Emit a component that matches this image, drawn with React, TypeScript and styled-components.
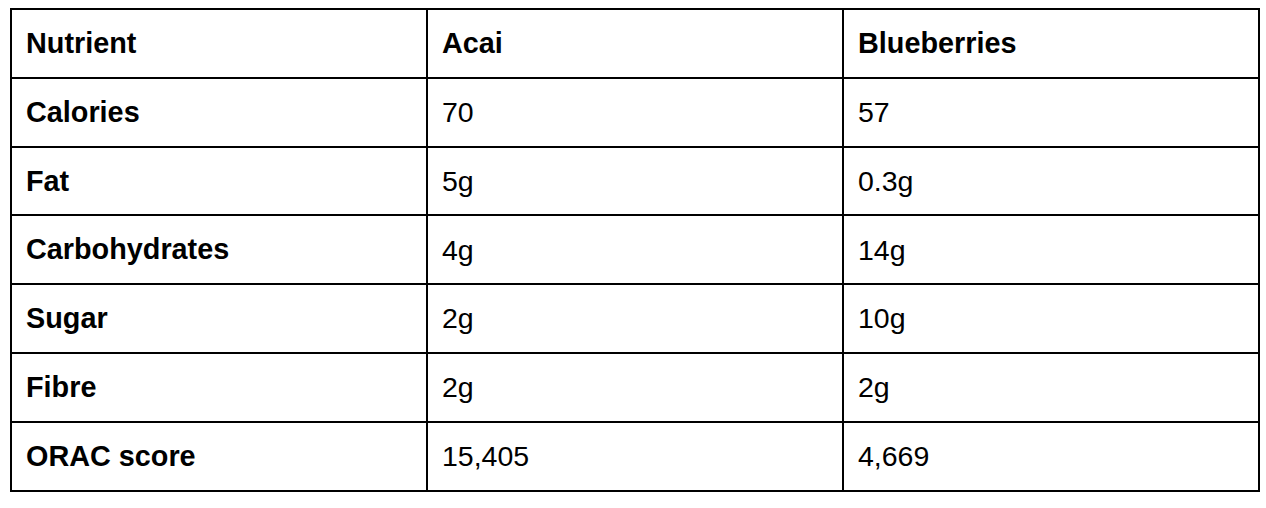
import styled, { createGlobalStyle } from "styled-components";

type Row = {
  nutrient: string;
  acai: string;
  blueberries: string;
};

const rows: Row[] = [
  { nutrient: "Calories", acai: "70", blueberries: "57" },
  { nutrient: "Fat", acai: "5g", blueberries: "0.3g" },
  { nutrient: "Carbohydrates", acai: "4g", blueberries: "14g" },
  { nutrient: "Sugar", acai: "2g", blueberries: "10g" },
  { nutrient: "Fibre", acai: "2g", blueberries: "2g" },
  { nutrient: "ORAC score", acai: "15,405", blueberries: "4,669" },
];

const GlobalStyle = createGlobalStyle`
  body {
    margin: 0;
    background: #fff;
    font-family: "Liberation Sans", Arial, sans-serif;
    color: #000;
  }
`;

const Page = styled.div`
  padding: 8px 0 0 10px;
`;

const Table = styled.table`
  width: 1250px;
  border-collapse: collapse;
  border: 2px solid #000;
  table-layout: fixed;
`;

const Tr = styled.tr`
  height: 68.8px;
`;

const Cell = styled.td<{ $bold?: boolean }>`
  border: 2px solid #000;
  padding: 0 14px;
  font-size: ${(p) => (p.$bold ? "28.8px" : "28.5px")};
  font-weight: ${(p) => (p.$bold ? 700 : 400)};
  line-height: 1;
  vertical-align: middle;
  text-align: left;
`;

export default function App(): JSX.Element {
  return (
    <>
      <GlobalStyle />
      <Page>
        <Table>
          <tbody>
            <Tr>
              <Cell $bold>Nutrient</Cell>
              <Cell $bold>Acai</Cell>
              <Cell $bold>Blueberries</Cell>
            </Tr>
            {rows.map((row) => (
              <Tr key={row.nutrient}>
                <Cell $bold>{row.nutrient}</Cell>
                <Cell>{row.acai}</Cell>
                <Cell>{row.blueberries}</Cell>
              </Tr>
            ))}
          </tbody>
        </Table>
      </Page>
    </>
  );
}
